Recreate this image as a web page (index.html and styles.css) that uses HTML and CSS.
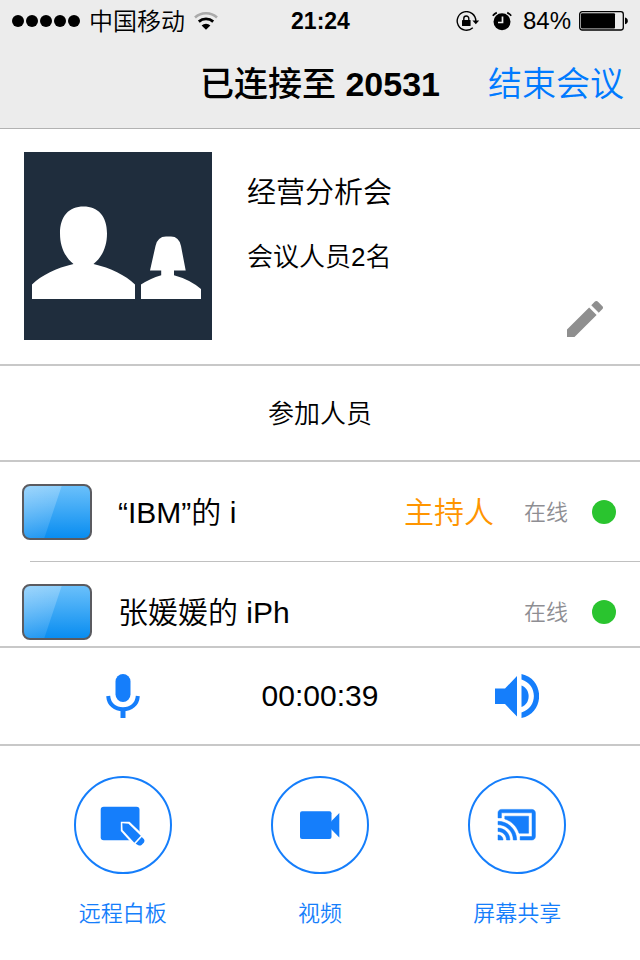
FILE: index.html
```html
<!DOCTYPE html>
<html lang="zh-CN">
<head>
  <meta charset="UTF-8">
  <title>经营分析会</title>
  <meta name="viewport" content="width=device-width, initial-scale=1.0">
  <link rel="stylesheet" href="styles.css">
</head>
<body>

  <header class="header">
    <div class="status-bar">
      <div class="status-left">
        <div class="signal"><i></i><i></i><i></i><i></i><i></i></div>
        <span class="carrier">中国移动</span>
        <svg class="wifi" width="24" height="18" viewBox="0 0 24 18" fill="none">
          <path d="M1 5.500a16.500 16.500 0 0 1 22 0" stroke="#aaa" stroke-width="2.600"/>
          <path d="M4.800 9.600a11 11 0 0 1 14.400 0" stroke="#000" stroke-width="2.800"/>
          <path d="M12 17.800l-4.400-4.400a6.400 6.400 0 0 1 8.800 0z" fill="#000"/>
        </svg>
      </div>
      <time class="clock">21:24</time>
      <div class="status-right">
        <svg width="24" height="20" viewBox="0 0 24 20">
          <path d="M16.800 16.800a9.300 9.300 0 1 1 3-6.800" fill="none" stroke="#000" stroke-width="1.400"/>
          <path d="M16.400 9.400h6.800l-3.400 3.800z"/>
          <rect x="6" y="9" width="8.600" height="6" rx="0.600"/>
          <path d="M7.800 9.500v-2a2.500 2.500 0 0 1 5 0v2" fill="none" stroke="#000" stroke-width="1.400"/>
        </svg>
        <svg class="alarm" width="20" height="20" viewBox="0 0 20 20">
          <circle cx="10" cy="10.800" r="8.500"/>
          <path d="M10.500 5.500v6H6" fill="none" stroke="#ececec" stroke-width="1.700"/>
          <path d="M.8 4.800a9 9 0 0 1 4-3.200M19.200 4.800a9 9 0 0 0-4-3.200" fill="none" stroke="#000" stroke-width="1.700"/>
        </svg>
        <span>84%</span>
        <svg class="battery" width="50" height="20" viewBox="0 0 50 20">
          <rect x="0.700" y="0.700" width="43.600" height="18.300" rx="2.500" fill="none" stroke="#000" stroke-width="1.300"/>
          <rect x="2" y="2.200" width="34" height="15.300" rx="1"/>
          <path d="M46 6.500c3.800.6 3.800 6.200 0 6.800z"/>
        </svg>
      </div>
    </div>
    <div class="nav-bar">
      <h1 class="nav-title">已连接至 <b>20531</b></h1>
      <button class="end-btn" type="button">结束会议</button>
    </div>
  </header>

  <section class="meeting">
    <svg class="avatar" width="188" height="188" viewBox="0 0 188 188">
      <rect width="188" height="188" fill="#1f2d3d"/>
      <g fill="#fff">
        <path d="M49.500 112C41 105 36 95 36 81.500C36 64 45 54.500 59.500 54.500S83 64 83 81.500C83 95 78 105 69.500 112C87 116 101 123 111 132.500V147H8V132.500C18 123 32 116 49.500 112z"/>
        <path d="M126 118.500L131.500 94Q133.500 84.500 142 84.500H147Q155 84.500 157 94L161.700 118.500H150V123.200Q166 127.500 177 137V147H117V132.500Q126 126.500 137.200 123.200V118.500z"/>
      </g>
    </svg>
    <div class="meeting-info">
      <h2 class="meeting-name">经营分析会</h2>
      <p class="meeting-count">会议人员2名</p>
    </div>
    <button class="edit-btn" type="button" aria-label="编辑">
      <svg width="36" height="36" viewBox="3 3 18 18" fill="#8f8f8f">
        <path d="M3 17.250V21h3.750L17.810 9.940l-3.750-3.750L3 17.250zM20.710 7.040c.39-.39.39-1.020 0-1.410l-2.340-2.340c-.39-.39-1.020-.39-1.410 0l-1.830 1.830 3.750 3.750 1.830-1.830z"/>
      </svg>
    </button>
  </section>

  <h2 class="list-title">参加人员</h2>

  <ul class="members">
    <li class="member">
      <svg class="screen" width="70" height="56" viewBox="0 0 70 56">
        <defs>
          <linearGradient id="screen-bg" x1="0" y1="0" x2="0" y2="1">
            <stop offset="0" stop-color="#6cc1fb"/>
            <stop offset="1" stop-color="#078cf0"/>
          </linearGradient>
          <linearGradient id="screen-shine" x1="0" y1="0" x2="0.500" y2="1">
            <stop offset="0" stop-color="#fff" stop-opacity="0.350"/>
            <stop offset="1" stop-color="#fff" stop-opacity="0.100"/>
          </linearGradient>
        </defs>
        <rect x="1" y="1" width="68" height="54" rx="7" fill="url(#screen-bg)"/>
        <path d="M8 1H40L22 55H8Q1 55 1 48V8Q1 1 8 1z" fill="url(#screen-shine)"/>
        <rect x="1" y="1" width="68" height="54" rx="7" fill="none" stroke="#5b5b60" stroke-width="2"/>
      </svg>
      <span class="member-name">“IBM”的 i</span>
      <span class="host">主持人</span>
      <span class="state">在线</span>
      <span class="dot"></span>
    </li>
    <li class="member">
      <svg class="screen" width="70" height="56" viewBox="0 0 70 56">
        <rect x="1" y="1" width="68" height="54" rx="7" fill="url(#screen-bg)"/>
        <path d="M8 1H40L22 55H8Q1 55 1 48V8Q1 1 8 1z" fill="url(#screen-shine)"/>
        <rect x="1" y="1" width="68" height="54" rx="7" fill="none" stroke="#5b5b60" stroke-width="2"/>
      </svg>
      <span class="member-name">张媛媛的 iPh</span>
      <span class="state">在线</span>
      <span class="dot"></span>
    </li>
  </ul>

  <div class="call-bar">
    <button class="call-btn" type="button" aria-label="麦克风">
      <svg width="34" height="44" viewBox="0 0 34 44" fill="#157efb">
        <rect x="9.500" y="0" width="15" height="28" rx="7.500"/>
        <path d="M2.200 22C2.800 30.500 9 35.300 17 35.300S31.200 30.500 31.800 22" fill="none" stroke="#157efb" stroke-width="4"/>
        <path d="M14.500 35h5v9h-5z"/>
      </svg>
    </button>
    <time class="timer">00:00:39</time>
    <button class="call-btn" type="button" aria-label="扬声器">
      <svg width="44" height="44" viewBox="0 0 44 44" fill="#157efb">
        <path d="M0 14.500H10L22 2V42.500L10 30H0z"/>
        <path d="M26.500 11.500C36 15 36 29.500 26.500 33z"/>
        <path d="M26.500 0C50 5 50 39 26.500 44V38.500C43 33.500 43 10.500 26.500 5.500z"/>
      </svg>
    </button>
  </div>

  <div class="actions">
    <button class="action" type="button">
      <span class="circle">
        <svg width="94" height="94" viewBox="2 2 94 94" fill="#157efb">
          <rect x="26.700" y="30.700" width="38.800" height="33.600" rx="3"/>
          <path d="M46.800 45.800H55.500L72 61.500L66 71L58.500 68L46.800 55z" fill="#fff"/>
          <path d="M48.300 47.300L54.500 47.800L66.800 59.700L60.300 66.800L48.600 54z"/>
          <path d="M67.800 61L70 63.200Q71 64.800 70 66.400L67.500 69Q65.800 70.200 64 69L61.600 67.800z"/>
        </svg>
      </span>
      <span class="action-label">远程白板</span>
    </button>
    <button class="action" type="button">
      <span class="circle">
        <svg width="94" height="94" viewBox="2 2 94 94" fill="#157efb">
          <rect x="29" y="35.300" width="31.500" height="27.800" rx="2"/>
          <path d="M60 45.500L68.300 37V61.500L60 53z"/>
        </svg>
      </span>
      <span class="action-label">视频</span>
    </button>
    <button class="action" type="button">
      <span class="circle">
        <svg width="94" height="94" viewBox="2 2 94 94" fill="#157efb">
          <path transform="translate(28.300 28.300) scale(1.700)" stroke="#157efb" stroke-width="0.300" d="M1 18v3h3c0-1.660-1.340-3-3-3zm0-4v2c2.760 0 5 2.240 5 5h2c0-3.870-3.130-7-7-7zm18-7H5v1.630c3.960 1.280 7.090 4.410 8.370 8.370H19V7zM1 10v2c4.970 0 9 4.030 9 9h2c0-6.080-4.930-11-11-11zm20-7H3c-1.100 0-2 .9-2 2v3h2V5h18v14h-7v2h7c1.100 0 2-.9 2-2V5c0-1.100-.9-2-2-2z"/>
        </svg>
      </span>
      <span class="action-label">屏幕共享</span>
    </button>
  </div>

</body>
</html>
```
FILE: styles.css
```css
* {
  box-sizing: border-box;
}

body {
  display: flex;
  flex-direction: column;
  height: 100vh;
  margin: 0;
  background: #fff;
  color: #000;
  font-family: "Liberation Sans", "Noto Sans CJK SC", sans-serif;
  font-weight: 350;
}

h1, h2, p, ul {
  margin: 0;
  padding: 0;
  font-weight: inherit;
}

button {
  padding: 0;
  border: none;
  background: none;
  font: inherit;
  cursor: pointer;
}

svg {
  display: block;
  flex: none;
}

/* header */
.header {
  background: #ececec;
  border-bottom: 1px solid #b2b2b2;
}

.status-bar {
  display: grid;
  grid-template-columns: 1fr auto 1fr;
  align-items: center;
  height: 40px;
  padding: 0 11px 0 12px;
  font-size: 24px;
  line-height: 40px;
}

.status-left,
.status-right {
  display: flex;
  align-items: center;
}

.status-left {
  gap: 9px;
}

.status-right {
  justify-content: flex-end;
}

.signal {
  display: flex;
  gap: 2px;
}

.signal i {
  width: 12px;
  height: 12px;
  border-radius: 50%;
  background: #000;
}

.carrier {
  padding-top: 2px;
}

.clock {
  font-size: 23px;
  font-weight: bold;
}

.alarm {
  margin: 0 11px 0 12px;
}

.battery {
  margin-left: 8px;
}

.nav-bar {
  display: grid;
  grid-template-columns: 1fr auto 1fr;
  align-items: center;
  height: 88px;
  padding: 0 16px;
  font-size: 34px;
  line-height: 48px;
}

.nav-title {
  grid-column: 2;
  font-size: 34px;
  font-weight: 500;
}

.end-btn {
  justify-self: end;
  color: #007aff;
  white-space: nowrap;
}

/* meeting */
.meeting {
  display: flex;
  padding: 23px 34px 24px 24px;
  border-bottom: 2px solid #c8c8c8;
}

.meeting-info {
  display: flex;
  flex: 1;
  flex-direction: column;
  gap: 24px;
  padding: 21px 0 0 35px;
  line-height: 40px;
}

.meeting-name {
  font-size: 29px;
}

.meeting-count {
  font-size: 26px;
}

.edit-btn {
  align-self: flex-end;
  padding: 3px;
}

.list-title {
  padding: 28px 0 26px;
  border-bottom: 2px solid #c8c8c8;
  font-size: 26px;
  line-height: 40px;
  text-align: center;
}

/* members */
.members {
  flex: 1;
  min-height: 100px;
  overflow-y: auto;
  scrollbar-width: none;
  list-style: none;
}

.member {
  display: flex;
  align-items: center;
  height: 100px;
  margin-left: 30px;
  padding-right: 24px;
  border-bottom: 1px solid #c0c0c0;
}

.screen {
  margin-left: -8px;
}

.member-name,
.host,
.state {
  padding-bottom: 4px;
}

.member-name {
  flex: 1;
  margin-left: 26px;
  font-size: 30px;
}

.host {
  color: #ff9500;
  font-size: 30px;
}

.state {
  margin: 0 24px 0 30px;
  color: #8e8e93;
  font-size: 22px;
}

.dot {
  width: 24px;
  height: 24px;
  border-radius: 50%;
  background: #2ac42f;
}

/* call bar */
.call-bar,
.actions {
  display: grid;
  grid-template-columns: repeat(3, 1fr);
  justify-items: center;
  padding: 0 24px;
}

.call-bar {
  align-items: center;
  height: 100px;
  border-top: 2px solid #c8c8c8;
  border-bottom: 2px solid #c8c8c8;
}

.timer {
  font-size: 30px;
}

/* actions */
.actions {
  padding-top: 30px;
  padding-bottom: 31px;
}

.action {
  display: flex;
  flex-direction: column;
  align-items: center;
  gap: 25px;
  color: #157efb;
}

.circle {
  border: 2px solid #157efb;
  border-radius: 50%;
}

.action-label {
  font-size: 22px;
  line-height: 30px;
}
```
